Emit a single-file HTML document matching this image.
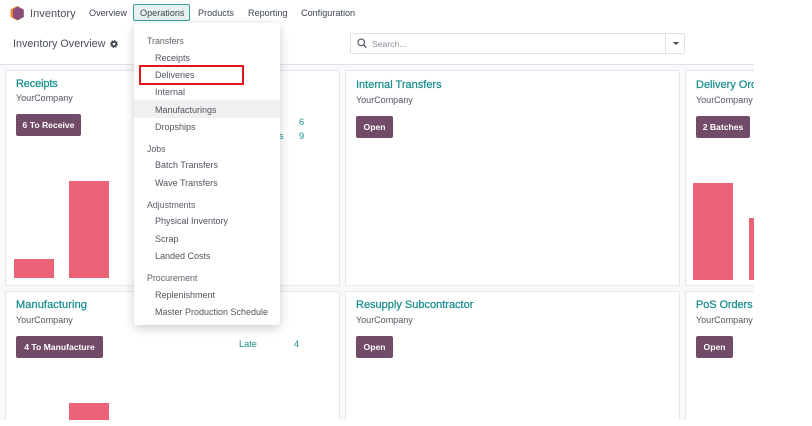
<!DOCTYPE html>
<html>
<head>
<meta charset="utf-8">
<style>
html,body{margin:0;padding:0;background:#fff}
body{width:812px;height:426px;position:relative;overflow:hidden;font-family:"Liberation Sans",sans-serif;color:#4a4f59}
.a{position:absolute;white-space:nowrap;line-height:12px}
.nav{font-size:9.1px;top:7px;color:#3c4450}
.bg{position:absolute;left:0;top:65px;width:754px;height:355px;background:#f8f9fb;overflow:hidden}
.line{position:absolute;left:0;top:64px;width:754px;height:1px;background:#dee1e6}
.card{position:absolute;background:#fff;box-sizing:border-box;border:1px solid #e5e7eb}
.t{font-size:11px;font-weight:400;color:#1a8e8e;-webkit-text-stroke:.25px #1a8e8e}
.c{font-size:9px;color:#4f5560}
.btn{position:absolute;background:#714b67;border-radius:2px;color:#fff;font-size:8.6px;font-weight:700;height:22px;line-height:22px;text-align:center;white-space:nowrap}
.bar{position:absolute;background:#ec6277}
.teal{font-size:9.2px;color:#1a8e8e}
.menu{position:absolute;left:134px;top:23px;width:146px;height:302px;background:#fff;border-radius:3px;box-shadow:0 3px 10px rgba(0,0,0,.2)}
.h{font-size:8.8px;color:#5d636d;left:13px}
.i{font-size:9px;color:#4f5560;left:21px}
</style>
</head>
<body>
<svg style="position:absolute;left:10px;top:6px" width="15" height="15" viewBox="0 0 15 15"><polygon points="7,0 13.5,3.5 13.5,11 7,14.5 0.5,11 0.5,3.5" fill="#f08a2c"/><polygon points="8,0.5 13.8,3.7 13.8,11 8,14.3 3,11.5 3,3.5" fill="#8a4d7c"/></svg>
<div class="a" style="left:30px;top:7.5px;font-size:11px;letter-spacing:.05px;color:#4a4f59">Inventory</div>
<div class="a nav" style="left:89px">Overview</div>
<div style="position:absolute;left:133px;top:4px;width:57px;height:17px;box-sizing:border-box;background:#e6f2f2;border:1px solid #3f9c9c;border-radius:2px"></div>
<div class="a nav" style="left:140px">Operations</div>
<div class="a nav" style="left:198px">Products</div>
<div class="a nav" style="left:248px">Reporting</div>
<div class="a nav" style="left:301px">Configuration</div>

<div class="a" style="left:13px;top:38px;font-size:10.8px;color:#4a4f59">Inventory Overview</div>
<svg style="position:absolute;left:110px;top:40px" width="8" height="8" viewBox="0 0 8 8"><circle cx="4" cy="4" r="2.2" fill="none" stroke="#3c4450" stroke-width="1.8"/><circle cx="4" cy="4" r="3.5" fill="none" stroke="#3c4450" stroke-width="1" stroke-dasharray="1.375 1.375"/></svg>

<div style="position:absolute;left:350px;top:33px;width:335px;height:21px;box-sizing:border-box;background:#fff;border:1px solid #dee1e6;border-radius:2px"></div>
<div style="position:absolute;left:665px;top:33px;width:1px;height:21px;background:#dee1e6"></div>
<svg style="position:absolute;left:357px;top:38px" width="10" height="11" viewBox="0 0 10 11"><circle cx="4.2" cy="4.4" r="3.3" fill="none" stroke="#4a4f59" stroke-width="1.1"/><path d="M6.6 6.9L9.2 9.7" stroke="#4a4f59" stroke-width="1.2"/></svg>
<div class="a" style="left:372px;top:37.5px;font-size:8.6px;color:#8a8f98">Search...</div>
<div style="position:absolute;left:673px;top:42px;width:0;height:0;border-left:3px solid transparent;border-right:3px solid transparent;border-top:3px solid #3c4450"></div>

<div class="line"></div>
<div class="bg">
  <div class="card" style="left:5px;top:5px;width:335px;height:216px"></div>
  <div class="card" style="left:345px;top:5px;width:335px;height:216px"></div>
  <div class="card" style="left:685px;top:5px;width:90px;height:216px"></div>
  <div class="card" style="left:5px;top:226px;width:335px;height:150px"></div>
  <div class="card" style="left:345px;top:226px;width:335px;height:150px"></div>
  <div class="card" style="left:685px;top:226px;width:90px;height:150px"></div>

  <div class="a t" style="left:16px;top:12.5px;letter-spacing:-.15px">Receipts</div>
  <div class="a c" style="left:16px;top:27px">YourCompany</div>
  <div class="btn" style="left:16px;top:49px;width:65px">6 To Receive</div>
  <div class="bar" style="left:14px;top:194px;width:40px;height:19px"></div>
  <div class="bar" style="left:69px;top:116px;width:40px;height:97px"></div>
  <div class="a teal" style="left:299px;top:51px">6</div>
  <div class="a teal" style="left:299px;top:65px">9</div>
  <div class="a teal" style="left:279px;top:65px">s</div>

  <div class="a t" style="left:356px;top:14px">Internal Transfers</div>
  <div class="a c" style="left:356px;top:29px">YourCompany</div>
  <div class="btn" style="left:356px;top:51px;width:37px">Open</div>

  <div class="a t" style="left:696px;top:14px;width:58px;overflow:hidden">Delivery Orders</div>
  <div class="a c" style="left:696px;top:29px;width:58px;overflow:hidden">YourCompany</div>
  <div class="btn" style="left:696px;top:51px;width:54px">2 Batches</div>
  <div class="bar" style="left:693px;top:118px;width:40px;height:97px"></div>
  <div class="bar" style="left:749px;top:153px;width:5px;height:62px"></div>

  <div class="a t" style="left:16px;top:234px;letter-spacing:.1px">Manufacturing</div>
  <div class="a c" style="left:16px;top:249px">YourCompany</div>
  <div class="btn" style="left:16px;top:271px;width:87px">4 To Manufacture</div>
  <div class="bar" style="left:69px;top:338px;width:40px;height:17px"></div>
  <div class="a teal" style="left:239px;top:273px">Late</div>
  <div class="a teal" style="left:294px;top:273px">4</div>

  <div class="a t" style="left:356px;top:234px">Resupply Subcontractor</div>
  <div class="a c" style="left:356px;top:249px">YourCompany</div>
  <div class="btn" style="left:356px;top:271px;width:37px">Open</div>

  <div class="a t" style="left:696px;top:234px;letter-spacing:-.1px">PoS Orders</div>
  <div class="a c" style="left:696px;top:249px;width:58px;overflow:hidden">YourCompany</div>
  <div class="btn" style="left:696px;top:271px;width:37px">Open</div>
</div>
<div style="position:absolute;left:754px;top:0;width:58px;height:426px;background:#fff"></div>

<div class="menu">
  <div class="a h" style="top:12px">Transfers</div>
  <div class="a i" style="top:28.5px">Receipts</div>
  <div class="a i" style="top:46px">Deliveries</div>
  <div class="a i" style="top:63px">Internal</div>
  <div style="position:absolute;left:0;top:77px;width:146px;height:18px;background:#f0f0f1"></div>
  <div class="a i" style="top:80.5px">Manufacturings</div>
  <div class="a i" style="top:98px">Dropships</div>
  <div class="a h" style="top:120px">Jobs</div>
  <div class="a i" style="top:136px">Batch Transfers</div>
  <div class="a i" style="top:153.5px">Wave Transfers</div>
  <div class="a h" style="top:175.5px">Adjustments</div>
  <div class="a i" style="top:192px">Physical Inventory</div>
  <div class="a i" style="top:209.5px">Scrap</div>
  <div class="a i" style="top:227px">Landed Costs</div>
  <div class="a h" style="top:249px">Procurement</div>
  <div class="a i" style="top:265.5px">Replenishment</div>
  <div class="a i" style="top:283px">Master Production Schedule</div>
</div>
<div style="position:absolute;left:139px;top:65px;width:105px;height:20px;box-sizing:border-box;border:2px solid #e8121d"></div>
</body>
</html>
